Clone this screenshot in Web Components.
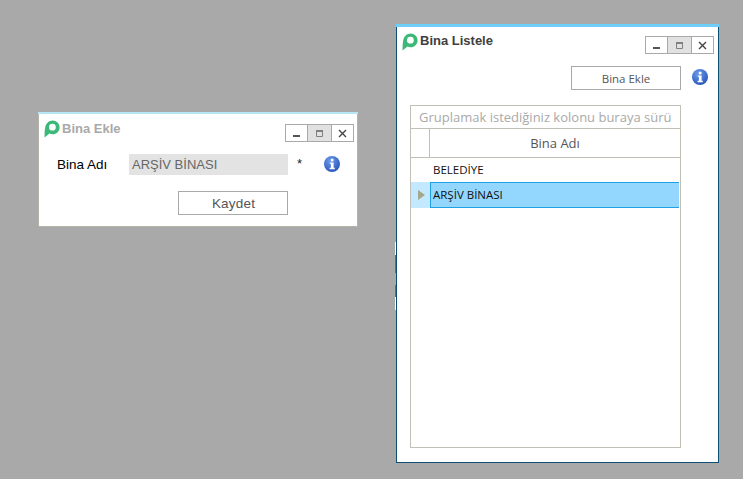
<!DOCTYPE html>
<html><head><meta charset="utf-8"><style>
html,body{margin:0;height:100%;overflow:hidden}
body{background:#a9a9a9;position:relative;width:743px;height:479px;font-family:"Liberation Sans",sans-serif}
#w1{left:38px;top:112px;width:320px;height:115px;--edge:#b5b3a6;--accent:#b4e6f5;--accent-h:2px;--title:#a9a9a9;--title-lh:17px}
#w2{left:396px;top:24px;width:323px;height:439px;--edge:#0b4f74;--accent:#6dcff8;--accent-h:3px;--title:#404040;--title-lh:15px}
#w2::after{content:"";position:absolute;left:-2px;top:218px;width:1px;height:68px;background:linear-gradient(#fff 0 13px,#2a7fa6 13px 31px,#6fc0cf 31px 43px,#2a7fa6 43px 55px,#fff 55px)}
</style></head><body>
<template id="t-logo"><style>:host{display:block;width:16px;height:18px}svg{display:block}</style>
<svg width="16" height="18" viewBox="0 0 16 18"><path fill-rule="evenodd" fill="#3cb878" d="M8.6 .6C12.4 .6 15.6 3.6 15.6 7.4S12.4 14.2 8.6 14.2C7.4 14.2 6.4 13.9 5.4 13.4L.6 17.6C.6 15 .4 11 1.2 7.4 2 3.4 5 .6 8.6 .6ZM8.4 3.8A3.4 3.4 0 1 0 8.4 10.6A3.4 3.4 0 1 0 8.4 3.8Z"/></svg></template>
<template id="t-info"><style>:host{display:block;width:16px;height:16px}svg{display:block}</style>
<svg width="16" height="16" viewBox="0 0 16 16"><defs><radialGradient id="g" cx=".4" cy=".3" r=".8"><stop offset="0" stop-color="#6f9cec"/><stop offset="1" stop-color="#1f4fb5"/></radialGradient></defs><circle cx="8" cy="8" r="8" fill="url(#g)"/><circle cx="8.2" cy="3.9" r="1.5" fill="#fff"/><path fill="#fff" d="M5.8 6.4H9.6V11.8H10.8V13.2H5.6V11.8H6.9V7.8H5.8Z"/></svg></template>
<template id="t-controls"><style>
:host{display:flex;width:69px;height:18px}
div{box-sizing:border-box;width:23px;height:18px;border:1px solid #a9a9a9;background:#fff;display:flex;align-items:center;justify-content:center}
.m{background:#e1e1e1;border-left:0;border-right:0}
svg{display:block}
</style>
<div><svg width="9" height="9" viewBox="0 0 9 9"><rect x="1" y="6" width="7" height="2" fill="#555"/></svg></div>
<div class="m"><svg width="9" height="9" viewBox="0 0 9 9"><path fill="none" stroke="#808080" d="M1.5 1.5H7.5V7.5H1.5Z"/><rect x="1" y="1" width="7" height="2" fill="#808080"/></svg></div>
<div><svg width="9" height="9" viewBox="0 0 9 9"><path fill="none" stroke="#444" stroke-width="1.4" d="M1 1L8 8M8 1L1 8"/></svg></div></template>
<template id="t-window"><style>
:host{position:absolute;display:block;box-sizing:border-box;background:#fff;border:1px solid var(--edge);border-top:0}
.accent{height:var(--accent-h);background:var(--accent);margin:0 -1px}
</style><div class="accent"></div><slot></slot></template>
<template id="t-head"><style>
:host{display:flex;gap:2px;font:bold 13px/var(--title-lh) "Liberation Sans",sans-serif;color:var(--title)}
</style><x-logo></x-logo><slot></slot></template>
<template id="t-btn"><style>
:host{display:flex;box-sizing:border-box;width:110px;height:24px;border:1px solid #a9a9a9;background:#fff;align-items:center;justify-content:center;color:#555}
</style><slot></slot></template>
<template id="t-ekle"><style>
:host{display:block;box-sizing:border-box;height:113px;font:13px "Liberation Sans",sans-serif}
.top{display:flex;justify-content:space-between;padding:6px 3px 0 5px}
.top x-controls{margin-top:4px}
.row{display:flex;align-items:flex-start;padding:12px 0 0 18px}
.lbl{width:72px;padding-top:3px;color:#000;line-height:15px;font-size:13.5px}
.inp{box-sizing:border-box;width:159px;height:21px;background:#e3e3e3;color:#666;padding:3px 3px;line-height:16px;font-size:13px}
.st{margin-left:9px;width:27px;padding-top:2px;color:#222;line-height:15px}
.row x-info{margin-top:2px}
.act{display:flex;justify-content:flex-end;padding:16px 69px 0 0}
x-btn{font-size:13.5px;letter-spacing:.2px;padding-left:1px}
</style>
<div class="top"><x-head>Bina Ekle</x-head><x-controls></x-controls></div>
<div class="row"><div class="lbl">Bina Adı</div><div class="inp">ARŞİV BİNASI</div><div class="st">*</div><x-info></x-info></div>
<div class="act"><x-btn>Kaydet</x-btn></div></template>
<template id="t-liste"><style>
:host{display:block;font:11.5px "Open Sans","Noto Sans",sans-serif}
.top{display:flex;justify-content:space-between;padding:6px 4px 0 5px}
.top x-controls{margin-top:3px}
.act{display:flex;align-items:flex-start;justify-content:flex-end;gap:11px;padding:12px 10px 0 0}
.act x-info{margin-top:3px}
x-grid{margin:15px 0 0 13px}
</style>
<div class="top"><x-head>Bina Listele</x-head><x-controls></x-controls></div>
<div class="act"><x-btn>Bina Ekle</x-btn><x-info></x-info></div>
<x-grid></x-grid></template>
<template id="t-grid"><style>
:host{display:block;box-sizing:border-box;width:271px;height:343px;border:1px solid #c2c0b4;font:11.5px "Open Sans","Noto Sans",sans-serif;overflow:hidden}
.grp{box-sizing:border-box;height:23px;padding:2px 0 0 8px;font-size:13px;line-height:19px;color:#a9a9a9;border-bottom:1px solid #c2c0b4;white-space:nowrap;overflow:hidden}
.r{display:grid;grid-template-columns:19px 1fr;box-sizing:border-box}
.i{border-right:1px solid #c2c0b4}
.h{height:29px;border-bottom:1px solid #c2c0b4}
.h .c{display:flex;align-items:center;justify-content:center;font-size:13px;color:#555}
.a{height:24px}
.a .c,.b .c{display:flex;align-items:center;color:#111;padding-bottom:2px}
.a .i{border-right:0}
.a .c{padding-left:3px}
.b{height:26px}
.b .i{background:#c2e9ff;border-right:0;display:flex;align-items:center;padding-left:7px}
.b .c{box-sizing:border-box;background:#93d7ff;border:1px solid #1ea0e2;border-right:0;margin-right:1px;padding-left:2px}
svg{display:block}
</style>
<div class="grp">Gruplamak istediğiniz kolonu buraya sürü</div>
<div class="r h"><div class="i"></div><div class="c">Bina Adı</div></div>
<div class="r a"><div class="i"></div><div class="c">BELEDİYE</div></div>
<div class="r b"><div class="i"><svg width="7" height="10" viewBox="0 0 7 10"><path d="M0 0L7 5L0 10Z" fill="#a3a88a"/></svg></div><div class="c">ARŞİV BİNASI</div></div>
</template>
<x-window id="w1"><x-ekle></x-ekle></x-window>
<x-window id="w2"><x-liste></x-liste></x-window>
<script>
for(const [tag,id] of [['x-logo','t-logo'],['x-info','t-info'],['x-controls','t-controls'],['x-window','t-window'],['x-head','t-head'],['x-btn','t-btn'],['x-ekle','t-ekle'],['x-liste','t-liste'],['x-grid','t-grid']]){
customElements.define(tag,class extends HTMLElement{constructor(){super();this.attachShadow({mode:'open'}).appendChild(document.getElementById(id).content.cloneNode(true))}});
}
</script>
</body></html>
